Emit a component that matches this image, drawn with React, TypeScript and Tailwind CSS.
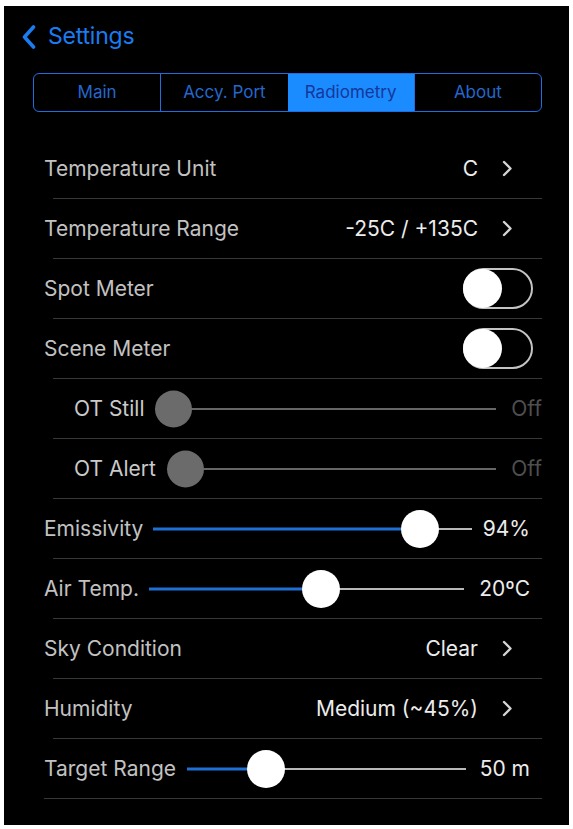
import React from 'react';

type Row =
  | { kind: 'link'; label: string; value: string }
  | { kind: 'toggle'; label: string }
  | {
      kind: 'slider';
      label: string;
      value: string;
      pct: number;
      labelW: number;
      valueW: number;
      indent?: boolean;
      disabled?: boolean;
    };

const rows: Row[] = [
  { kind: 'link', label: 'Temperature Unit', value: 'C' },
  { kind: 'link', label: 'Temperature Range', value: '-25C / +135C' },
  { kind: 'toggle', label: 'Spot Meter' },
  { kind: 'toggle', label: 'Scene Meter' },
  { kind: 'slider', label: 'OT Still', value: 'Off', pct: 0, labelW: 81, valueW: 46, indent: true, disabled: true },
  { kind: 'slider', label: 'OT Alert', value: 'Off', pct: 0, labelW: 93, valueW: 46, indent: true, disabled: true },
  { kind: 'slider', label: 'Emissivity', value: '94%', pct: 0.883, labelW: 109, valueW: 70 },
  { kind: 'slider', label: 'Air Temp.', value: '20ºC', pct: 0.552, labelW: 105, valueW: 78 },
  { kind: 'link', label: 'Sky Condition', value: 'Clear' },
  { kind: 'link', label: 'Humidity', value: 'Medium (~45%)' },
  { kind: 'slider', label: 'Target Range', value: '50 m', pct: 0.249, labelW: 143, valueW: 76 },
];

const tabs = ['Main', 'Accy. Port', 'Radiometry', 'About'];

const Chevron = () => (
  <svg width="11" height="17" viewBox="0 0 11 17" fill="none">
    <path d="M2 2l6.5 6.5L2 15" stroke="#d4d4d4" strokeWidth="2.4" strokeLinecap="round" strokeLinejoin="round" />
  </svg>
);

const Toggle = () => (
  <div className="relative h-[41px] w-[70px] rounded-full border-2 border-[#c4c4c4]">
    <div className="absolute left-[-2px] top-[-1px] size-[39px] rounded-full bg-white" />
  </div>
);

const Slider = ({ pct, disabled }: { pct: number; disabled?: boolean }) => {
  const d = disabled ? 37 : 38;
  return (
    <div className="relative flex h-[40px] flex-1 items-center">
      <div className={disabled ? 'h-[2px] w-full bg-[#666]' : 'h-[2px] w-full bg-[#b8b8b8]'} />
      {!disabled && (
        <div
          className="absolute left-0 top-1/2 h-[3px] -translate-y-1/2 bg-[#1f6fd4]"
          style={{ width: `calc(${pct} * (100% - ${d}px) + ${d / 2}px)` }}
        />
      )}
      <div
        className={
          disabled
            ? 'absolute top-1/2 size-[37px] -translate-y-1/2 rounded-full bg-[#6b6b6b]'
            : 'absolute top-1/2 size-[38px] -translate-y-1/2 rounded-full bg-white'
        }
        style={{ left: `calc(${pct} * (100% - ${d}px))` }}
      />
    </div>
  );
};

export default function App() {
  return (
    <div className="h-[829px] w-full bg-white pb-[4px] pl-[4px] pr-[4px] pt-[6px] font-['Inter','Liberation_Sans',sans-serif]">
      <div className="h-full w-full bg-black">
        {/* nav bar */}
        <div className="flex h-[60px] items-center pl-[18px] pt-[1px]">
          <svg width="14" height="24" viewBox="0 0 14 24" fill="none" className="mr-[12px]">
            <path d="M11.5 2L2.5 12l9 10" stroke="#1a7cf0" strokeWidth="3.6" strokeLinecap="round" strokeLinejoin="round" />
          </svg>
          <span className="text-[23px] leading-none tracking-[-0.2px] text-[#1a7cf0]">Settings</span>
        </div>

        {/* segmented control */}
        <div className="ml-[29px] mr-[27px] mt-[7px] flex h-[39px] overflow-hidden rounded-[6px] border-[1.5px] border-[#1e6ee0]">
          {tabs.map((t, i) => (
            <div
              key={t}
              className={
                t === 'Radiometry'
                  ? 'flex flex-1 items-center justify-center bg-[#1a8cff] text-[17px] text-[#15379a]'
                  : i === 0
                    ? 'flex flex-1 items-center justify-center text-[17px] text-[#2567cc]'
                    : 'flex flex-1 items-center justify-center border-l-[1.5px] border-[#1e6ee0] text-[17px] text-[#2567cc]'
              }
            >
              {t}
            </div>
          ))}
        </div>

        {/* list */}
        <div className="mt-[27px] pl-[40px] pr-[27px]">
          {rows.map((r, i) => (
            <div key={r.label}>
              <div className="flex h-[59px] items-center text-[21px] text-[#c2c2c2]">
                {r.kind === 'link' && (
                  <>
                    <span className="flex-1">{r.label}</span>
                    <span className="text-[#ececec]">{r.value}</span>
                    <span className="ml-[24px] mr-[29px] flex">
                      <Chevron />
                    </span>
                  </>
                )}
                {r.kind === 'toggle' && (
                  <>
                    <span className="flex-1">{r.label}</span>
                    <div className="mr-[9px]">
                      <Toggle />
                    </div>
                  </>
                )}
                {r.kind === 'slider' && (
                  <>
                    <span
                      className={r.indent ? 'ml-[30px] shrink-0 text-[#cacaca]' : 'shrink-0'}
                      style={{ width: r.labelW }}
                    >
                      {r.label}
                    </span>
                    <Slider pct={r.pct} disabled={r.disabled} />
                    <span
                      className={
                        r.disabled
                          ? 'shrink-0 text-right text-[#4f4f4f]'
                          : 'shrink-0 pr-[12px] text-right text-[#ececec]'
                      }
                      style={{ width: r.valueW }}
                    >
                      {r.value}
                    </span>
                  </>
                )}
              </div>
              <div className={i === rows.length - 1 ? 'h-px bg-[#383838]' : 'ml-[9px] h-px bg-[#383838]'} />
            </div>
          ))}
        </div>
      </div>
    </div>
  );
}
